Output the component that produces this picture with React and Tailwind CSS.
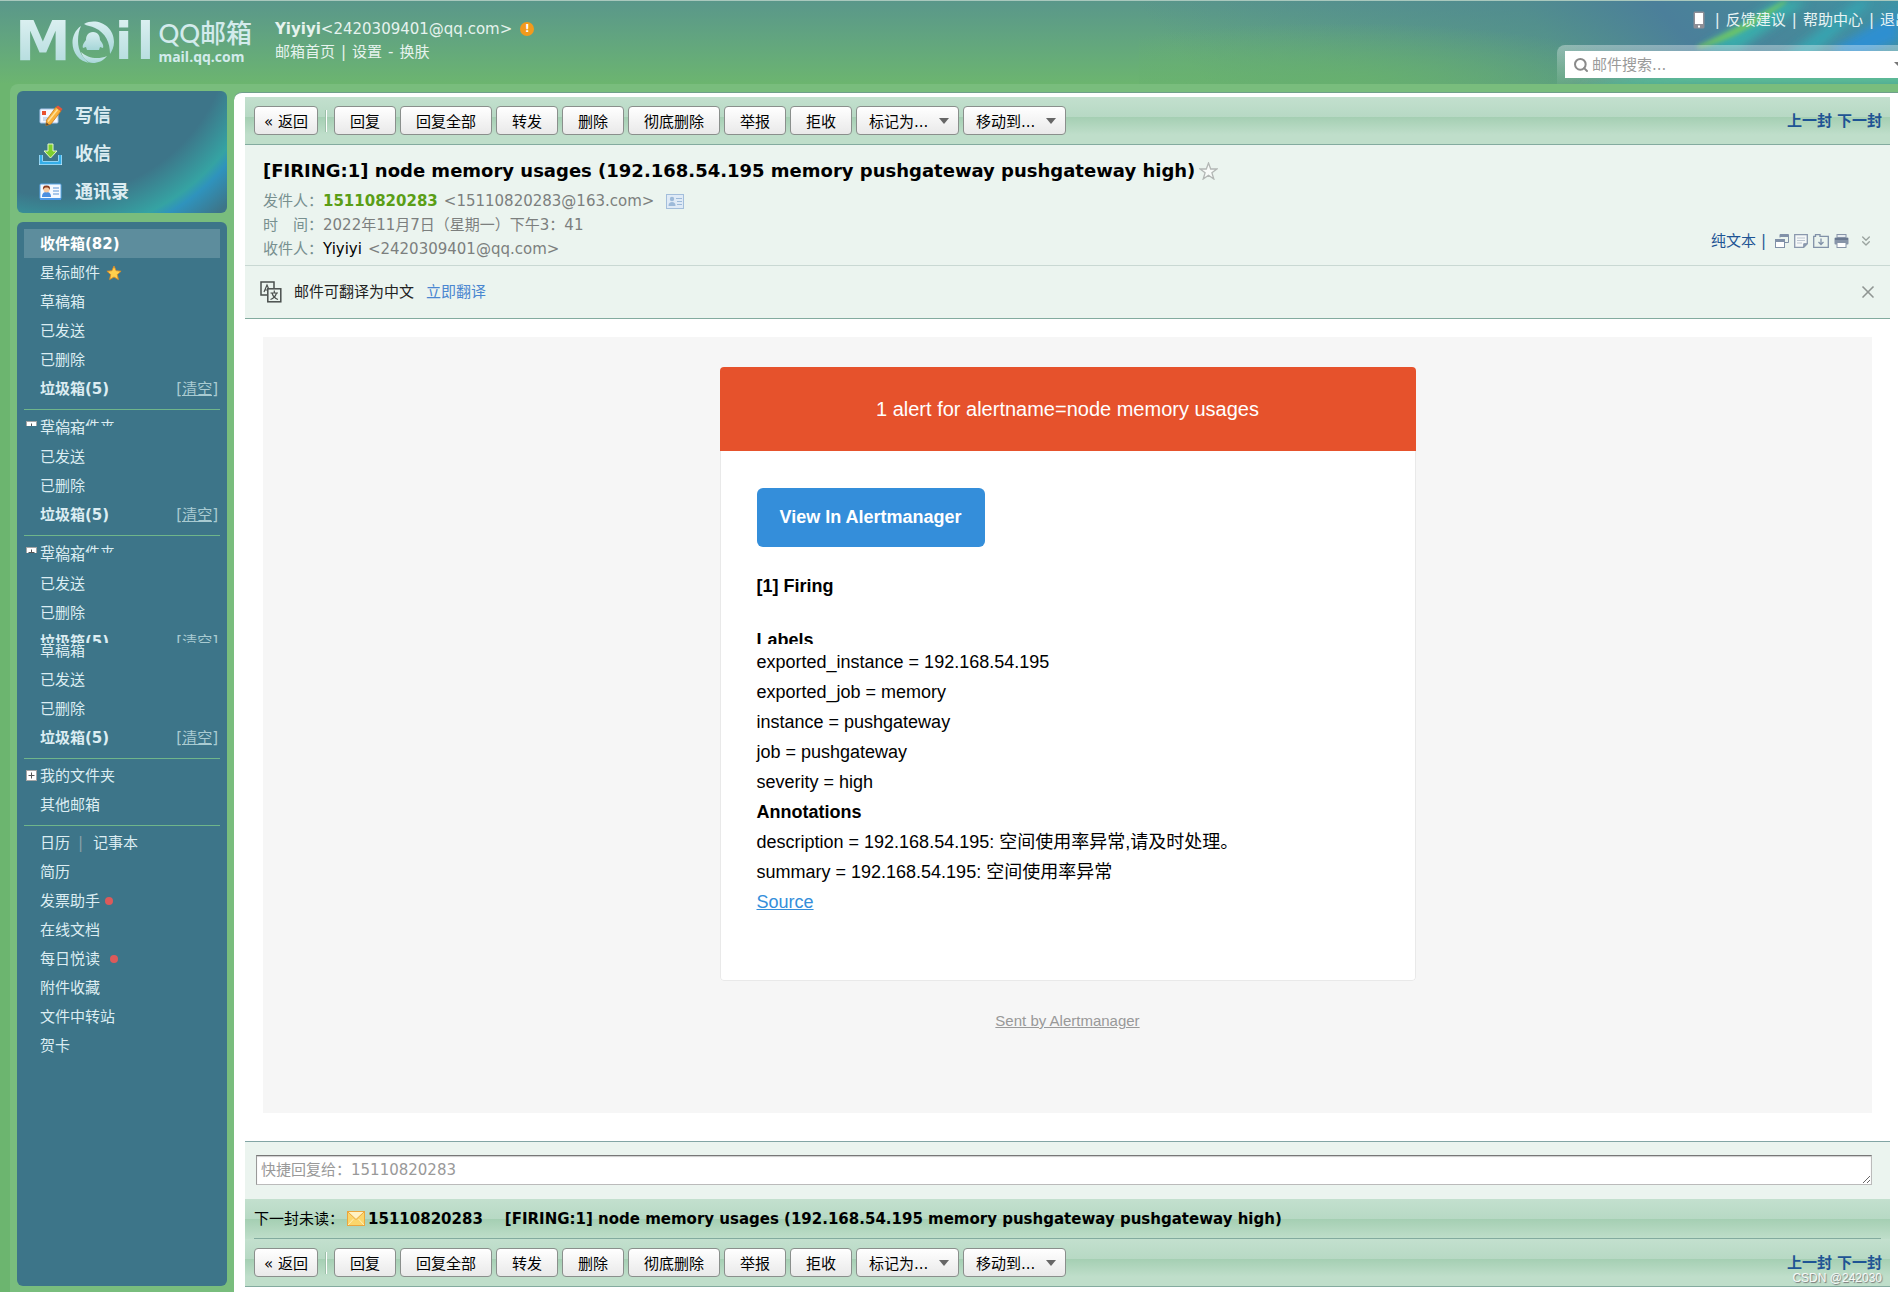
import React from "react";
import { ChevronsDown, X, Search } from "lucide-react";

const SUBJECT = "[FIRING:1] node memory usages (192.168.54.195 memory pushgateway pushgateway high)";

const ACTIONS = ["回复", "回复全部", "转发", "删除", "彻底删除", "举报", "拒收"];

const LABELS = [
  "exported_instance = 192.168.54.195",
  "exported_job = memory",
  "instance = pushgateway",
  "job = pushgateway",
  "severity = high",
];

const ANNOTATIONS = [
  "description = 192.168.54.195: 空间使用率异常,请及时处理。",
  "summary = 192.168.54.195: 空间使用率异常",
];

/* ---------- icons ---------- */

const WriteIcon = () => (
  <svg width="24" height="22" viewBox="0 0 24 22">
    <rect x="1" y="4" width="18" height="14" rx="1" fill="#f4f8ff" stroke="#a8c6ea" />
    <rect x="3" y="6" width="4" height="4" fill="#e8502f" />
    <path d="M4 13h5M4 15h4" stroke="#9db9dc" />
    <path d="M17 2l5 4-10 13-5 1.500 0.500-5.500z" fill="#f9b13a" stroke="#c9791a" strokeWidth="0.800" />
    <path d="M17 2l2-1.500 4.500 3.500-1.500 2z" fill="#e8543a" />
    <path d="M18.500 4.500l-9.500 12" stroke="#ffe19a" strokeWidth="1.500" />
    <path d="M7.500 17.500l-0.500 3 3-1z" fill="#5a4632" />
  </svg>
);

const ReceiveIcon = () => (
  <svg width="24" height="22" viewBox="0 0 24 22">
    <path d="M2 12v8h19v-8" fill="none" stroke="#eaf8ff" strokeWidth="4" />
    <path d="M2 12v8h19v-8" fill="none" stroke="#34aee9" strokeWidth="3" />
    <path d="M9 1h5v7h4l-6.500 7L5 8h4z" fill="#7ed02c" stroke="#e6f8c9" strokeWidth="1" />
  </svg>
);

const ContactsIcon = () => (
  <svg width="24" height="20" viewBox="0 0 24 20">
    <rect x="1" y="2" width="21" height="15" rx="1" fill="#f5faff" stroke="#5aa7e8" />
    <path d="M3 15c0-4 2-5 4.500-5s4.500 1 4.500 5z" fill="#4b8fe0" />
    <circle cx="7.500" cy="7.500" r="3" fill="#f6c9a0" />
    <path d="M4 8c-.500-4 1.500-4.500 3.500-4.500s4 .500 3.500 4.500c-1-2-2-2.500-3.500-2.500s-2.500.500-3.500 2.500z" fill="#8b3f22" />
    <path d="M14 6h6M14 9h6M14 12h6" stroke="#8fb6e3" strokeWidth="1.500" />
    <rect x="1" y="16" width="21" height="2" fill="#4c98e6" />
  </svg>
);

const PlusBox = () => (
  <svg width="11" height="11" viewBox="0 0 11 11" className="shrink-0">
    <rect x="0.500" y="0.500" width="10" height="10" fill="#fff" stroke="#a5a5a5" />
    <path d="M2.500 5.500h6M5.500 2.500v6" stroke="#555" />
  </svg>
);

const StarIcon = () => (
  <svg width="16" height="16" viewBox="0 0 16 16">
    <path
      d="M8 1l2.100 4.700 5 .500-3.800 3.400 1.100 5L8 12l-4.400 2.600 1.100-5L.900 6.200l5-.500z"
      fill="#ffcf4d"
      stroke="#d98a25"
      strokeWidth="0.900"
    />
  </svg>
);

const StarOutline = () => (
  <svg width="19" height="18" viewBox="0 0 19 18">
    <path
      d="M9.500 1l2.200 6h6.200l-5 3.800 1.900 6.200-5.300-3.800L4.200 17l1.900-6.200-5-3.800h6.200z"
      fill="#f7faf8"
      stroke="#b3b7b5"
      strokeWidth="1.300"
    />
  </svg>
);

const CardIcon = () => (
  <svg width="18" height="15" viewBox="0 0 18 15">
    <rect x="0.500" y="0.500" width="17" height="14" fill="#dfeaf6" stroke="#a3bedb" />
    <circle cx="6" cy="5" r="2.200" fill="#9dbad9" />
    <path d="M2.500 12c0-3 1.500-4 3.500-4s3.500 1 3.500 4z" fill="#9dbad9" />
    <path d="M10 4.500h6M11 7.500h5M11 10.500h5" stroke="#9dbad9" />
  </svg>
);

const TranslateIcon = () => (
  <svg width="22" height="22" viewBox="0 0 22 22" fill="none" stroke="#4a4f4d">
    <path d="M7 14H1V1h13v6" strokeWidth="1.500" />
    <path d="M4 11l3-7 1.500 3.500M5 9h3" strokeWidth="1.200" />
    <rect x="7.800" y="7.800" width="13" height="13" strokeWidth="1.500" />
    <path d="M14.300 9.500v2M10.500 12h7.500M16.500 12c-1 3.500-3 5.500-6 6.500M12 12c1 3.500 3 5.500 6 6.500" strokeWidth="1.200" />
  </svg>
);

const MailIcon = () => (
  <svg width="18" height="15" viewBox="0 0 18 15">
    <rect x="0.500" y="0.500" width="17" height="14" fill="#fbd66b" stroke="#eba63c" />
    <path d="M1 1l8 7.500L17 1" fill="#fff2c4" stroke="#e9a93f" />
    <path d="M1 14l5.500-6M17 14l-5.500-6" stroke="#fff0bd" />
  </svg>
);

const PhoneIcon = () => (
  <svg width="12" height="18" viewBox="0 0 12 18">
    <rect x="0.500" y="0.500" width="11" height="17" rx="1.500" fill="#8d8e96" />
    <rect x="2" y="2" width="8" height="11" fill="#fff" />
    <rect x="5" y="14.500" width="2" height="2" fill="#fff" />
  </svg>
);

const WindowIcon = () => (
  <svg width="14" height="14" viewBox="0 0 14 14">
    <path d="M5 3.500V.500h8.500v8H10" fill="none" stroke="#8191a8" />
    <path d="M5 2h8.500" stroke="#8191a8" strokeWidth="2" />
    <rect x="0.500" y="5.500" width="9" height="8" fill="#fff" stroke="#8191a8" />
    <path d="M1 7h8" stroke="#8191a8" strokeWidth="2" />
  </svg>
);

const NoteIcon = () => (
  <svg width="14" height="14" viewBox="0 0 14 14" fill="none" stroke="#8a98ad">
    <path d="M.700.700h12.600v9l-3.600 3.600h-9z" strokeWidth="1.300" fill="#f5f8f8" />
    <path d="M3 4h8M3 6.500h8M3 9h5" stroke="#bcc5d0" />
    <path d="M13 9.700H9.700V13z" fill="#8a98ad" />
  </svg>
);

const ArchiveIcon = () => (
  <svg width="16" height="14" viewBox="0 0 16 14" fill="none" stroke="#8191a8">
    <path d="M.700 13.300v-11h1.800V.700h4.500v1.600h8.300v11z" strokeWidth="1.300" />
    <path d="M8 4.500v6M5.500 8L8 10.500 10.500 8" strokeWidth="1.300" />
  </svg>
);

const PrintIcon = () => (
  <svg width="15" height="14" viewBox="0 0 15 14">
    <rect x="3" y="0.500" width="9" height="3" fill="#e6ebf0" stroke="#8794a8" />
    <rect x="0.500" y="3.500" width="14" height="7" rx="1" fill="#8794a8" />
    <path d="M1 5h13" stroke="#5f6f88" strokeWidth="1.500" />
    <rect x="3" y="8.500" width="9" height="5" fill="#fff" stroke="#8794a8" />
  </svg>
);

const LogoMark = () => (
  <svg width="44" height="44" viewBox="0 0 44 44">
    <defs>
      <linearGradient id="mark" x1="0" y1="0" x2="0" y2="1">
        <stop offset="0" stopColor="#d8eef0" />
        <stop offset="1" stopColor="#a6d6d8" />
      </linearGradient>
    </defs>
    <g fill="url(#mark)">
      <path d="M13 4C26-3 43 6 43 22c0 5-2 9-4 12 0-11-4-21-15-26-4-2-8-2-11-4z" />
      <path d="M10 6C0 13-1 27 6 36c3 4 8 6 12 7C12 38 7 31 7 21c0-6 1-11 3-15z" />
      <path d="M10 32c6 6 17 8 26 4-4 5-9 7-14 7-6 0-10-5-12-11z" />
      <path d="M22 12c-5 0-7 4-7 8-2 3-4 5-3 8l3-1 1 3h12l1-3 3 1c1-3-1-5-3-8 0-4-2-8-7-8z" />
    </g>
  </svg>
);

/* ---------- header ---------- */

const Aurora = () => (
  <svg className="absolute inset-y-0 right-0 h-full w-2/5" viewBox="0 0 760 84" preserveAspectRatio="none">
    <defs>
      <linearGradient id="sky" x1="0" y1="0.100" x2="1" y2="0">
        <stop offset="0" stopColor="#4b7f9a" stopOpacity="0" />
        <stop offset="0.500" stopColor="#4b8593" stopOpacity="0.600" />
        <stop offset="0.680" stopColor="#4b7f9a" />
        <stop offset="0.850" stopColor="#46899a" />
        <stop offset="1" stopColor="#3f93a5" />
      </linearGradient>
      <radialGradient id="meadow">
        <stop offset="0" stopColor="#67b06f" />
        <stop offset="1" stopColor="#67b06f" stopOpacity="0" />
      </radialGradient>
      <filter id="soft" x="-20%" y="-50%" width="140%" height="200%">
        <feGaussianBlur stdDeviation="5" />
      </filter>
      <filter id="thin" x="-20%" y="-50%" width="140%" height="200%">
        <feGaussianBlur stdDeviation="2" />
      </filter>
    </defs>
    <rect width="760" height="84" fill="url(#sky)" />
    <ellipse cx="200" cy="84" rx="320" ry="62" fill="url(#meadow)" />
    <g filter="url(#soft)">
      <path d="M560 50L640 0h30L600 50z" fill="#38b0ad" opacity="0.900" />
      <path d="M640 60L720 0h14L670 60z" fill="#35aab5" opacity="0.800" />
      <path d="M690 50L760 10v30l-40 18z" fill="#2f8fd0" />
      <path d="M440 88C560 60 660 72 770 54v34z" fill="#4bb28c" />
    </g>
    <g filter="url(#thin)">
      <path d="M558 46C590 32 620 14 645 0h5C625 18 600 38 560 48z" fill="#7fd24f" opacity="0.700" />
    </g>
  </svg>
);

const Header = () => (
  <header className="relative flex h-[84px] justify-between overflow-hidden border-t border-[#a9c8bd] bg-linear-to-b from-[#5a978a] to-[#6cb56f]">
    <Aurora />
    <div className="relative flex">
      <a href="#home" className="flex w-[275px] pl-[15px] pt-3" aria-label="QQ邮箱">
        <span className="bg-linear-to-b from-[#e0f2f3] to-[#a3d4d6] bg-clip-text text-[56px] font-bold leading-[56px] text-transparent">
          M
        </span>
        <span className="pt-[7px]">
          <LogoMark />
        </span>
        <span className="flex gap-1 text-[52px] font-bold leading-[56px] text-transparent">
          <span className="bg-linear-to-b from-[#e0f2f3] to-[#a3d4d6] bg-clip-text">i</span>
          <span className="bg-linear-to-b from-[#e0f2f3] to-[#a3d4d6] bg-clip-text">l</span>
        </span>
        <span className="ml-1 flex flex-col pt-1 text-[#d3ebec]">
          <span className="whitespace-nowrap font-[Lato,'Noto_Sans_CJK_SC',sans-serif] text-[26px] font-medium leading-8">
            QQ邮箱
          </span>
          <span className="font-['Open_Sans',sans-serif] text-sm font-bold leading-4">mail.qq.com</span>
        </span>
      </a>
      <div className="flex flex-col pt-4 text-[#e6f3ee]">
        <div className="flex h-6 items-center">
          <b>Yiyiyi</b>
          <span>&lt;2420309401@qq.com&gt;</span>
          <span className="ml-2 flex size-3.5 items-center justify-center rounded-full bg-[#f39a1c] text-[11px] font-bold text-white">
            !
          </span>
        </div>
        <nav className="flex h-[22px] items-center gap-1.5">
          <a href="#index">邮箱首页</a>|<a href="#settings">设置</a>-<a href="#skin">换肤</a>
        </nav>
      </div>
    </div>
    <div className="relative -mr-3 flex flex-col items-end justify-between">
      <nav className="mt-[7px] flex h-6 items-center gap-1.5 text-[#e8f4f4]">
        <a href="#mobile" aria-label="手机" className="mr-1">
          <PhoneIcon />
        </a>
        |<a href="#feedback">反馈建议</a>|<a href="#help">帮助中心</a>|<a href="#logout">退出</a>
      </nav>
      <div className="w-[353px] rounded-tl-lg bg-linear-to-b from-white/35 to-white/5 pb-1.5 pl-2 pt-1.5">
        <div className="flex h-[27px] items-center bg-white pl-2 pr-1">
          <Search size={16} strokeWidth={3} className="text-[#8a8a8a]" />
          <input
            type="text"
            aria-label="邮件搜索"
            placeholder="邮件搜索..."
            className="ml-[3px] min-w-0 flex-1 outline-none placeholder:text-[#9a9a9a]"
          />
          <svg width="12" height="6" viewBox="0 0 12 6">
            <path d="M0 0h12L6 6z" fill="#777" />
          </svg>
        </div>
      </div>
    </div>
  </header>
);

/* ---------- sidebar ---------- */

const Folder = ({ name, bold, children }) => (
  <div className="flex h-[29px] shrink-0 items-center px-4">
    <a href="#folder" className={bold ? "font-bold" : ""}>
      {name}
    </a>
    {children}
  </div>
);

const Trash = () => (
  <div className="flex h-[29px] shrink-0 items-center justify-between pl-4 pr-0.5">
    <a href="#trash" className="font-bold">
      垃圾箱(5)
    </a>
    <a href="#clear" className="text-[#a9cbd2] underline">
      [清空]
    </a>
  </div>
);

const MyFolders = () => (
  <div className="flex h-[29px] shrink-0 items-center gap-[3px] pl-0.5">
    <PlusBox />
    <a href="#folders">我的文件夹</a>
  </div>
);

const Divider = () => <div className="mb-0.5 mt-1.5 h-px bg-[#6fb58a]" />;

const Dot = () => <span className="block size-2 rounded-full bg-[#dc5a5a]" />;

const Sidebar = () => (
  <aside className="flex w-[224px] shrink-0 flex-col gap-[9px] pb-1.5 pl-[7px] pr-[7px] pt-[7px] text-[#dcedf2]">
    <nav className="flex flex-col rounded-md bg-[#3d7589] bg-[radial-gradient(circle_at_40px_-70px,transparent_175px,#35a3a3_212px,#2f93bd_222px,transparent_250px)] pb-0.5 pl-[22px] pt-1.5 text-lg font-bold leading-[38px]">
      <a href="#write" className="flex items-center gap-3">
        <WriteIcon />
        写信
      </a>
      <a href="#receive" className="flex items-center gap-3">
        <ReceiveIcon />
        收信
      </a>
      <a href="#contacts" className="flex items-center gap-3">
        <ContactsIcon />
        通讯录
      </a>
    </nav>
    <nav className="flex flex-1 flex-col rounded-md bg-[#3d7589] px-[7px] pb-2 pt-[7px]">
      <div className="bg-[#5d8d9d] text-white">
        <Folder name="收件箱(82)" bold />
      </div>
      <Folder name="星标邮件">
        <span className="ml-1.5">
          <StarIcon />
        </span>
      </Folder>
      <Folder name="草稿箱" />
      <Folder name="已发送" />
      <Folder name="已删除" />
      <Trash />
      <Divider />

      <div className="h-3.5 overflow-hidden">
        <MyFolders />
      </div>
      <div className="flex h-4 flex-col justify-end overflow-hidden">
        <Folder name="草稿箱" />
      </div>
      <Folder name="已发送" />
      <Folder name="已删除" />
      <Trash />
      <Divider />

      <div className="h-[15px] overflow-hidden">
        <MyFolders />
      </div>
      <div className="flex h-4 flex-col justify-end overflow-hidden">
        <Folder name="草稿箱" />
      </div>
      <Folder name="已发送" />
      <Folder name="已删除" />
      <div className="h-4 overflow-hidden">
        <Trash />
      </div>
      <div className="flex h-[22px] flex-col justify-end overflow-hidden">
        <Folder name="草稿箱" />
      </div>
      <Folder name="已发送" />
      <Folder name="已删除" />
      <Trash />
      <Divider />

      <MyFolders />
      <Folder name="其他邮箱" />
      <Divider />

      <Folder name="日历">
        <span className="ml-2 mr-2.5 text-[#8aa0a8]">|</span>
        <a href="#notes">记事本</a>
      </Folder>
      <Folder name="简历" />
      <Folder name="发票助手">
        <span className="ml-[5px]">
          <Dot />
        </span>
      </Folder>
      <Folder name="在线文档" />
      <Folder name="每日悦读">
        <span className="ml-2.5">
          <Dot />
        </span>
      </Folder>
      <Folder name="附件收藏" />
      <Folder name="文件中转站" />
      <Folder name="贺卡" />
    </nav>
  </aside>
);

/* ---------- mail ---------- */

const ToolButton = ({ children, className = "px-[15px]" }) => (
  <button
    type="button"
    className={`h-[29px] rounded border border-[#8a8f8c] bg-linear-to-b from-white to-[#e9e9e9] pt-[3px] ${className}`}
  >
    {children}
  </button>
);

const ToolSelect = ({ label }) => (
  <div className="relative">
    <select
      aria-label={label}
      className="h-[29px] w-[103px] appearance-none rounded border border-[#8a8f8c] bg-linear-to-b from-white to-[#e9e9e9] pl-3 pt-[3px]"
    >
      <option>{label}...</option>
    </select>
    <svg width="10" height="6" viewBox="0 0 10 6" className="pointer-events-none absolute right-2.5 top-3">
      <path d="M0 0h10L5 6z" fill="#666" />
    </svg>
  </div>
);

const Toolbar = () => (
  <div className="flex h-12 items-center justify-between border-b border-[#83ab9f] bg-[linear-gradient(to_bottom,#c3e0ce,#b7d9c4_42%,#a5cfb3_43%,#bfdeca_80%)] pl-[9px] pr-2">
    <div className="flex items-center gap-1">
      <ToolButton className="px-[9px]">« 返回</ToolButton>
      <span className="mx-[3px] h-[22px] w-0.5 border-l border-[#9dbfa9] bg-white" />
      {ACTIONS.map((action) => (
        <ToolButton key={action}>{action}</ToolButton>
      ))}
      <ToolSelect label="标记为" />
      <ToolSelect label="移动到" />
    </div>
    <div className="flex gap-[5px] font-bold text-[#1e5494]">
      <a href="#prev">上一封</a>
      <a href="#next">下一封</a>
    </div>
  </div>
);

const MailInfo = () => (
  <section className="flex items-end justify-between border-b border-[#c9d8d3] bg-[#ebf4ef] pb-1 pl-[18px] pr-4 pt-3 text-[#7c7f7e]">
    <div>
      <h1 className="mb-1 flex h-7 items-center gap-1 text-lg font-bold text-black">
        {SUBJECT}
        <StarOutline />
      </h1>
      <div className="flex h-6 items-center">
        <span className="w-[60px] text-[#78908f]">发件人：</span>
        <b className="text-[#5a9e16]">15110820283</b>
        <span className="ml-1.5">&lt;15110820283@163.com&gt;</span>
        <span className="ml-3">
          <CardIcon />
        </span>
      </div>
      <div className="flex h-6 items-center">
        <span className="w-[60px] text-[#78908f]">时　间：</span>
        2022年11月7日（星期一）下午3：41
      </div>
      <div className="flex h-6 items-center">
        <span className="w-[60px] text-[#78908f]">收件人：</span>
        <span className="text-black">Yiyiyi</span>
        <span className="ml-1.5">&lt;2420309401@qq.com&gt;</span>
      </div>
    </div>
    <div className="flex h-10 items-center gap-[5px]">
      <a href="#plain" className="text-[#1e5494]">
        纯文本
      </a>
      <span className="mr-1 text-[#1e5494]">|</span>
      <button type="button" aria-label="新窗口打开">
        <WindowIcon />
      </button>
      <button type="button" aria-label="记事">
        <NoteIcon />
      </button>
      <button type="button" aria-label="导出">
        <ArchiveIcon />
      </button>
      <button type="button" aria-label="打印">
        <PrintIcon />
      </button>
      <button type="button" aria-label="更多" className="ml-1 text-[#9aa39f]">
        <ChevronsDown size={16} strokeWidth={2} />
      </button>
    </div>
  </section>
);

const TranslateBar = () => (
  <section className="flex h-[53px] items-center justify-between border-b border-[#83ab9f] bg-[#ebf4ef] pl-[15px] pr-3 text-[#222]">
    <div className="flex items-center">
      <TranslateIcon />
      <span className="ml-3">邮件可翻译为中文</span>
      <a href="#translate" className="ml-3 text-[#4a86d0]">
        立即翻译
      </a>
    </div>
    <button type="button" aria-label="关闭" className="text-[#8f9593]">
      <X size={20} strokeWidth={2} />
    </button>
  </section>
);

const AlertCard = () => (
  <div className="bg-[#f6f6f6] pb-20 pt-[30px] font-['Liberation_Sans','Noto_Sans_CJK_SC',sans-serif]">
    <div className="mx-auto max-w-[696px] overflow-hidden rounded bg-white">
      <div className="bg-[#e6522c] text-center text-xl leading-[84px] text-white">
        1 alert for alertname=node memory usages
      </div>
      <div className="rounded-b border-x border-b border-[#e9e9e9] px-9 pb-[63px] pt-[37px] text-lg leading-[30px] text-black">
        <a
          href="#alertmanager"
          className="inline-block rounded-md bg-[#348eda] px-[23px] text-lg font-bold leading-[59px] text-white"
        >
          View In Alertmanager
        </a>
        <p className="mt-6 font-bold">[1] Firing</p>
        <p className="mb-[3px] mt-6 h-[19px] overflow-hidden font-bold">Labels</p>
        {LABELS.map((line) => (
          <p key={line}>{line}</p>
        ))}
        <p className="font-bold">Annotations</p>
        {ANNOTATIONS.map((line) => (
          <p key={line}>{line}</p>
        ))}
        <a href="#source" className="block w-fit text-[#348eda] underline">
          Source
        </a>
      </div>
    </div>
    <p className="mt-7 text-center leading-6">
      <a href="#sent" className="text-[#999] underline">
        Sent by Alertmanager
      </a>
    </p>
  </div>
);

const QuickReply = () => (
  <section className="flex border-t border-[#83a5a5] bg-[#ebf4ef] pb-3.5 pl-[11px] pr-[18px] pt-[13px]">
    <textarea
      aria-label="快捷回复"
      placeholder="快捷回复给：15110820283"
      className="h-[30px] w-full resize overflow-hidden border border-b-[#bbb] border-l-[#999] border-r-[#bbb] border-t-[#777] bg-white px-1 pt-1 shadow-[inset_0_1px_1px_#ccc] placeholder:text-[#999]"
    />
  </section>
);

const NextUnread = () => (
  <section className="bg-[linear-gradient(to_bottom,#c3e0ce,#b7d9c4_50%,#a5cfb3_51%,#bfdeca)] px-[9px]">
    <div className="flex h-10 items-center border-b border-[#83ab9f]">
      <span>下一封未读：</span>
      <span className="mx-[3px]">
        <MailIcon />
      </span>
      <a href="#unread" className="flex gap-[22px] font-bold text-black">
        <span>15110820283</span>
        <span>{SUBJECT}</span>
      </a>
    </div>
  </section>
);

const App = () => {
  return (
    <div className="flex min-h-screen flex-col overflow-x-hidden bg-[#6cb56f] font-['DejaVu_Sans','Noto_Sans_CJK_SC',sans-serif] text-[15px] leading-5 text-black">
      <Header />
      <div className="flex flex-1 pl-2.5">
        <div className="flex min-w-0 flex-1 rounded-tl-lg bg-[#79bd7d]">
          <Sidebar />
          <main className="relative mt-2 flex min-w-0 flex-1 flex-col rounded-tl-lg border-t border-[#6f9f8b] bg-white pb-[5px] pl-[11px] pr-2 pt-1">
            <Toolbar />
            <MailInfo />
            <TranslateBar />
            <article className="flex-1 px-[18px] pb-7 pt-[18px]">
              <AlertCard />
            </article>
            <QuickReply />
            <NextUnread />
            <Toolbar />
            <span className="absolute bottom-1.5 right-4 font-['Liberation_Sans',sans-serif] text-xs leading-4 text-white/90 [text-shadow:1px_1px_1px_#777]">
              CSDN @242030
            </span>
          </main>
        </div>
      </div>
    </div>
  );
};

export default App;
